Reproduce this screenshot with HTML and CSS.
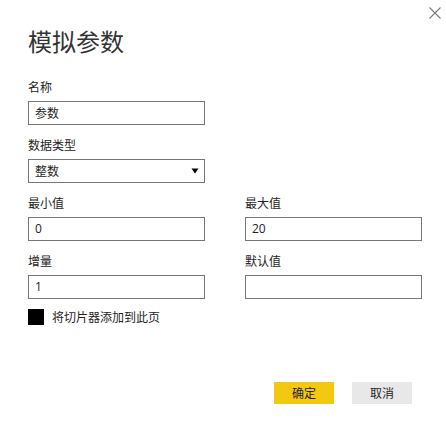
FILE: index.html
```html
<!DOCTYPE html>
<html lang="zh-CN">
<head>
<meta charset="utf-8">
<link rel="stylesheet" href="styles.css">
</head>
<body>
<div class="dialog">
  <button class="close" aria-label="关闭">
    <svg width="12" height="12" viewBox="0 0 12 12"><path d="M0.5 0.5 L11.5 11.5 M11.5 0.5 L0.5 11.5" stroke="#7a7a7a" stroke-width="1.1" fill="none"/></svg>
  </button>
  <h1 class="title">模拟参数</h1>
  <div class="form">
    <div class="field">
      <label class="label">名称</label>
      <div class="input">参数</div>
    </div>
    <div class="field">
      <label class="label">数据类型</label>
      <div class="input select">
        <span>整数</span>
        <svg class="arrow" width="8" height="6" viewBox="0 0 8 6"><path d="M0.5 0.5 H7.5 L4 5.5 Z" fill="#000"/></svg>
      </div>
    </div>
    <div class="grid">
      <div class="field">
        <label class="label">最小值</label>
        <div class="input num">0</div>
      </div>
      <div class="field">
        <label class="label">最大值</label>
        <div class="input num">20</div>
      </div>
      <div class="field">
        <label class="label">增量</label>
        <div class="input num">1</div>
      </div>
      <div class="field">
        <label class="label">默认值</label>
        <div class="input num"></div>
      </div>
    </div>
    <div class="check">
      <span class="box"></span>
      <span class="check-text">将切片器添加到此页</span>
    </div>
  </div>
  <div class="actions">
    <button class="btn primary">确定</button>
    <button class="btn secondary">取消</button>
  </div>
</div>
</body>
</html>
```
FILE: styles.css
```css
* { box-sizing: border-box; }
html, body {
  margin: 0;
  padding: 0;
  background: #fff;
}
body {
  font-family: "Noto Sans", "Noto Sans CJK SC", sans-serif;
  color: #252423;
  width: 446px;
  height: 428px;
  overflow: hidden;
}
.dialog {
  position: relative;
  padding: 25px 0 0 28px;
}
.close {
  position: absolute;
  top: 7px;
  left: 429px;
  width: 12px;
  height: 12px;
  padding: 0;
  border: 0;
  background: none;
  display: block;
}
.close svg { display: block; }
.title {
  margin: 0;
  font-size: 24px;
  line-height: 32px;
  font-weight: normal;
  color: #333;
  font-family: "Noto Sans CJK SC", sans-serif;
}
.form {
  margin-top: 22px;
  display: flex;
  flex-direction: column;
  gap: 12px;
}
.field {
  display: flex;
  flex-direction: column;
  gap: 6px;
  width: 177px;
}
.label {
  font-size: 12px;
  line-height: 16px;
  color: #252423;
  font-family: "Noto Sans CJK SC", sans-serif;
}
.input {
  height: 24px;
  width: 177px;
  border: 1px solid #777;
  padding: 0 6px;
  font-size: 12px;
  line-height: 22px;
  color: #252423;
  font-family: "Noto Sans CJK SC", sans-serif;
  display: flex;
  align-items: center;
}
.input.num {
  font-family: "Open Sans", "Noto Sans", sans-serif;
}
.select {
  justify-content: space-between;
  padding-right: 5px;
}
.arrow { display: block; }
.grid {
  display: grid;
  grid-template-columns: 177px 177px;
  column-gap: 40px;
  row-gap: 12px;
}
.check {
  margin-top: -2px;
  display: flex;
  align-items: center;
  gap: 8px;
}
.box {
  width: 16px;
  height: 16px;
  background: #000;
  display: block;
}
.check-text {
  font-size: 12px;
  line-height: 16px;
  font-family: "Noto Sans CJK SC", sans-serif;
  color: #252423;
}
.actions {
  margin-top: 57px;
  display: flex;
  gap: 18px;
  padding-left: 246px;
}
.btn {
  width: 60px;
  height: 22px;
  border: 0;
  padding: 0;
  font-size: 12px;
  line-height: 22px;
  font-family: "Noto Sans CJK SC", sans-serif;
  color: #252423;
}
.primary { background: #f2c811; }
.secondary { background: #e8e8e8; }
```
